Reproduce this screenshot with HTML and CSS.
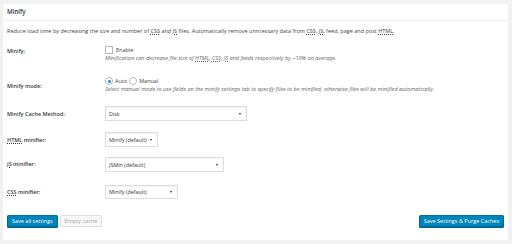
FILE: index.html
```html
<!DOCTYPE html>
<html>
<head>
<meta charset="utf-8">
<link rel="stylesheet" href="styles.css">
</head>
<body>
<div class="panel">
  <div class="panel-head">Minify</div>
  <div class="panel-body">
    <p class="desc">Reduce load time by decreasing the size and number of <abbr>CSS</abbr> and <abbr>JS</abbr> files. Automatically remove unncessary data from <abbr>CSS</abbr>, <abbr>JS</abbr>, feed, page and post <abbr>HTML</abbr>.</p>

    <div class="row row-minify">
      <div class="label">Minify:</div>
      <div class="field">
        <div class="line"><span class="checkbox"></span><span class="opt">Enable</span></div>
        <div class="hint">Minification can decrease file size of <abbr>HTML</abbr>, <abbr>CSS</abbr>, <abbr>JS</abbr> and feeds respectively by ~10% on average.</div>
      </div>
    </div>

    <div class="row row-mode">
      <div class="label">Minify mode:</div>
      <div class="field">
        <div class="line"><span class="radio checked"></span><span class="opt">Auto</span><span class="radio"></span><span class="opt">Manual</span></div>
        <div class="hint">Select manual mode to use fields on the minify settings tab to specify files to be minified, otherwise files will be minified automatically.</div>
      </div>
    </div>

    <div class="row row-cache">
      <div class="label">Minify Cache Method:</div>
      <div class="select w-cache"><span>Disk</span><span class="arrow"></span></div>
    </div>

    <div class="row row-html">
      <div class="label"><abbr>HTML</abbr> minifier:</div>
      <div class="select w-html"><span>Minify (default)</span><span class="arrow"></span></div>
    </div>

    <div class="row row-js">
      <div class="label"><abbr>JS</abbr> minifier:</div>
      <div class="select w-js"><span>JSMin (default)</span><span class="arrow"></span></div>
    </div>

    <div class="row row-css">
      <div class="label"><abbr>CSS</abbr> minifier:</div>
      <div class="select w-css"><span>Minify (default)</span><span class="arrow"></span></div>
    </div>

    <div class="actions">
      <div class="btn btn-primary">Save all settings</div>
      <div class="btn btn-disabled">Empty cache</div>
      <div class="spacer"></div>
      <div class="btn btn-primary">Save Settings &amp; Purge Caches</div>
    </div>
  </div>
</div>
</body>
</html>
```

FILE: styles.css
```css
html, body {
  margin: 0;
  padding: 0;
  background: #f1f1f1;
  font-family: "Open Sans", "Liberation Sans", sans-serif;
  color: #444;
}
.panel {
  margin: 4px 4px 0 3px;
  height: 236px;
  background: #fff;
  box-shadow: 0 1px 1px rgba(0,0,0,0.04);
  border: 0;
  box-sizing: border-box;
}
.panel-head {
  height: 16px;
  line-height: 16px;
  padding-left: 4px;
  font-size: 6.2px;
  font-weight: 600;
  color: #32373c;
  border-bottom: 1px solid #eee;
}
.panel-body {
  padding: 0 4px;
}
abbr {
  text-decoration: underline dotted;
  text-underline-offset: 1px;
}
.desc {
  margin: 6px 0 0;
  font-size: 5.5px;
  line-height: 8px;
  color: #444;
}
.row {
  display: flex;
  align-items: flex-start;
}
.label {
  width: 98px;
  flex: none;
  font-size: 5.5px;
  font-weight: 600;
  line-height: 8px;
  color: #32373c;
}
.field {
  font-size: 5.5px;
  line-height: 8px;
}
.line {
  display: flex;
  align-items: center;
  height: 8px;
}
.opt {
  color: #444;
  margin-right: 2px;
}
.hint {
  font-style: italic;
  color: #666;
  font-size: 5.6px;
}
.checkbox {
  width: 6px;
  height: 6px;
  border: 1px solid #b4b9be;
  margin-right: 3px;
  background: #fff;
}
.radio {
  width: 6px;
  height: 6px;
  border: 1px solid #b4b9be;
  border-radius: 50%;
  margin-right: 2px;
  position: relative;
  background: #fff;
}
.radio.checked::after {
  content: "";
  position: absolute;
  left: 1.5px;
  top: 1.5px;
  width: 3px;
  height: 3px;
  border-radius: 50%;
  background: #1e8cbe;
}
.row-minify { margin-top: 10px; height: 20px; }
.row-minify .label { padding-top: 2px; }
.row-minify .line { margin-top: 1px; }
.row-mode { margin-top: 12px; height: 18px; }
.row-mode .label { padding-top: 5px; }
.row-cache { margin-top: 11px; }
.row-cache .label { padding-top: 4px; }
.row-html { margin-top: 11px; }
.row-html .label { padding-top: 4px; }
.row-js { margin-top: 10px; }
.row-js .label { padding-top: 3px; }
.row-css { margin-top: 13px; }
.row-css .label { padding-top: 3px; }

.select {
  box-sizing: border-box;
  height: 15px;
  border: 1px solid #ddd;
  box-shadow: inset 0 1px 1px rgba(0,0,0,0.05);
  display: flex;
  align-items: center;
  justify-content: space-between;
  padding: 0 5px 0 3px;
  font-size: 5.4px;
  color: #32373c;
  background: #fff;
}
.row-css .select { height: 14px; }
.arrow {
  width: 0;
  height: 0;
  border-left: 1.5px solid transparent;
  border-right: 1.5px solid transparent;
  border-top: 2px solid #23282d;
}
.w-cache { width: 142px; }
.w-html { width: 53px; }
.w-js { width: 119px; }
.w-css { width: 73px; }

.actions {
  display: flex;
  margin-top: 16px;
  gap: 2px;
}
.spacer { flex: 1; }
.btn {
  box-sizing: border-box;
  height: 12px;
  line-height: 10px;
  font-size: 5.5px;
  padding: 0 4px;
  border: 1px solid;
  border-radius: 1.5px;
  white-space: nowrap;
}
.btn-primary {
  background: #0085ba;
  border-color: #0073aa #006799 #006799;
  color: #fff;
  box-shadow: 0 1px 0 #006799;
}
.btn-disabled {
  background: #f7f7f7;
  border-color: #ddd;
  color: #a0a5aa;
}
```
